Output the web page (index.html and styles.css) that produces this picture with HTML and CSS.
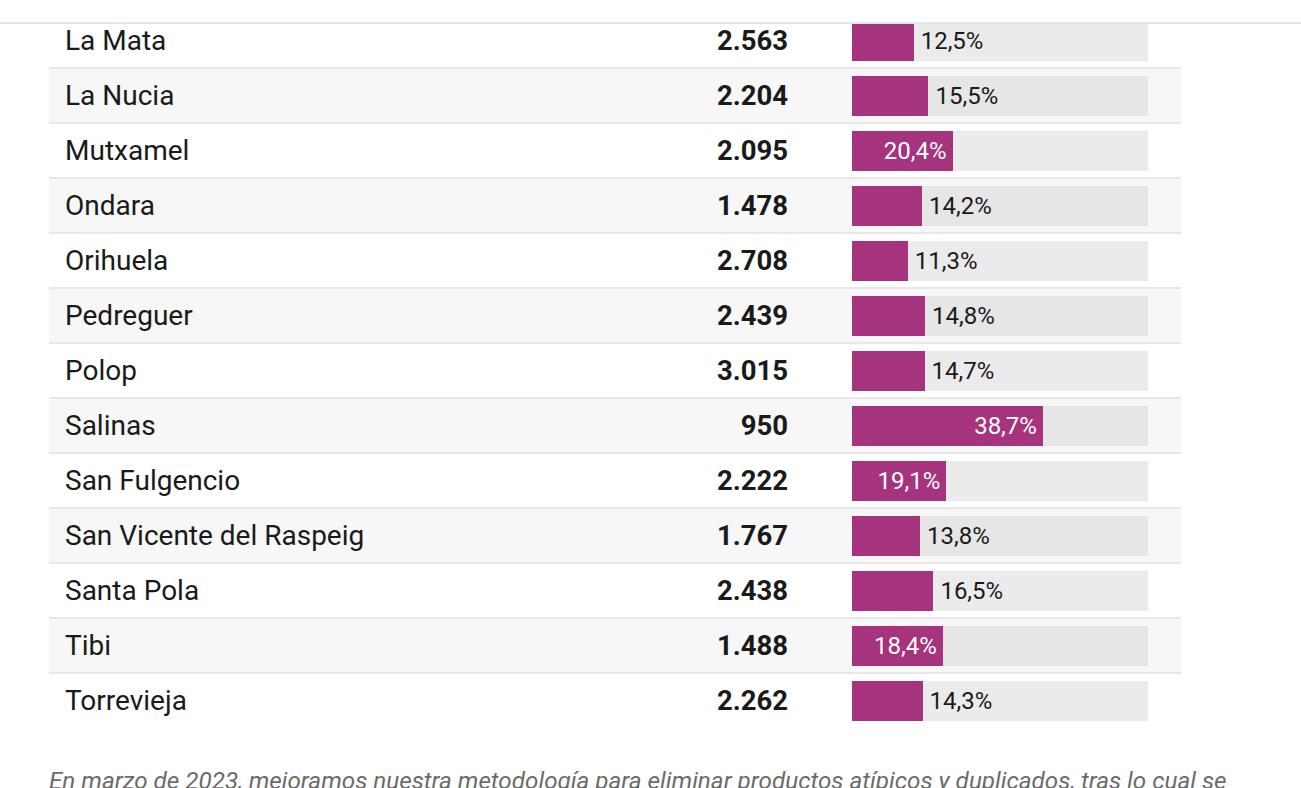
FILE: index.html
```html
<!DOCTYPE html>
<html lang="es">
<head>
<meta charset="utf-8">
<title>Tabla municipios</title>
<link rel="stylesheet" href="styles.css">
</head>
<body>
<div class="topbar"></div>
<main class="wrap">
  <div class="table">
    <div class="row"><div class="name">La Mata</div><div class="num">2.563</div><div class="track"><div class="bar" style="width:20.83%"></div><span class="lbl">12,5%</span></div></div>
    <div class="row alt"><div class="name">La Nucia</div><div class="num">2.204</div><div class="track"><div class="bar" style="width:25.83%"></div><span class="lbl">15,5%</span></div></div>
    <div class="row"><div class="name">Mutxamel</div><div class="num">2.095</div><div class="track"><div class="bar" style="width:34%"><span class="lbl in">20,4%</span></div></div></div>
    <div class="row alt"><div class="name">Ondara</div><div class="num">1.478</div><div class="track"><div class="bar" style="width:23.67%"></div><span class="lbl">14,2%</span></div></div>
    <div class="row"><div class="name">Orihuela</div><div class="num">2.708</div><div class="track"><div class="bar" style="width:18.83%"></div><span class="lbl">11,3%</span></div></div>
    <div class="row alt"><div class="name">Pedreguer</div><div class="num">2.439</div><div class="track"><div class="bar" style="width:24.67%"></div><span class="lbl">14,8%</span></div></div>
    <div class="row"><div class="name">Polop</div><div class="num">3.015</div><div class="track"><div class="bar" style="width:24.5%"></div><span class="lbl">14,7%</span></div></div>
    <div class="row alt"><div class="name">Salinas</div><div class="num">950</div><div class="track"><div class="bar" style="width:64.5%"><span class="lbl in">38,7%</span></div></div></div>
    <div class="row"><div class="name">San Fulgencio</div><div class="num">2.222</div><div class="track"><div class="bar" style="width:31.83%"><span class="lbl in">19,1%</span></div></div></div>
    <div class="row alt"><div class="name">San Vicente del Raspeig</div><div class="num">1.767</div><div class="track"><div class="bar" style="width:23%"></div><span class="lbl">13,8%</span></div></div>
    <div class="row"><div class="name">Santa Pola</div><div class="num">2.438</div><div class="track"><div class="bar" style="width:27.5%"></div><span class="lbl">16,5%</span></div></div>
    <div class="row alt"><div class="name">Tibi</div><div class="num">1.488</div><div class="track"><div class="bar" style="width:30.67%"><span class="lbl in">18,4%</span></div></div></div>
    <div class="row"><div class="name">Torrevieja</div><div class="num">2.262</div><div class="track"><div class="bar" style="width:23.83%"></div><span class="lbl">14,3%</span></div></div>
  </div>
  <p class="note">En marzo de 2023, mejoramos nuestra metodología para eliminar productos atípicos y duplicados, tras lo cual se</p>
</main>
</body>
</html>
```

FILE: styles.css
```css
* { box-sizing: border-box; }
html, body { margin: 0; padding: 0; background: #fff; }
body {
  font-family: Roboto, "Liberation Sans", Arial, sans-serif;
  color: #1a1a1a;
  overflow: hidden;
}
.topbar {
  position: fixed;
  top: 0; left: 0; right: 0;
  height: 24px;
  background: #fff;
  border-bottom: 2px solid #e5e5e5;
  z-index: 5;
}
.wrap {
  padding: 12px 0 0 49px;
}
.table {
  width: 1132px;
}
.row {
  display: grid;
  grid-template-columns: 1fr auto 296px;
  align-items: center;
  height: 55px;
  border-top: 2px solid #e8e8e8;
  padding: 0 33px 0 16px;
  background: #fff;
}
.row.alt { background: #f7f7f7; }
.name {
  font-size: 28px;
  line-height: 32px;
}
.num {
  font-size: 27.5px;
  line-height: 32px;
  font-weight: 700;
  text-align: right;
  padding-right: 64px;
}
.track {
  height: 40px;
  margin-top: 1px;
  background: #ebebeb;
  display: flex;
  align-items: center;
}
.row.alt .track { background: #e6e6e6; }
.bar {
  height: 100%;
  background: #a6337d;
  display: flex;
  align-items: center;
  justify-content: flex-end;
}
.lbl {
  font-size: 24px;
  line-height: 28px;
  padding-left: 7px;
  color: #1a1a1a;
}
.lbl.in {
  color: #fff;
  padding-left: 0;
  padding-right: 6px;
}
.note {
  margin: 37px 0 0 0;
  width: 1230px;
  font-size: 24.25px;
  line-height: 34px;
  font-style: italic;
  color: #6b6b6b;
}
```
